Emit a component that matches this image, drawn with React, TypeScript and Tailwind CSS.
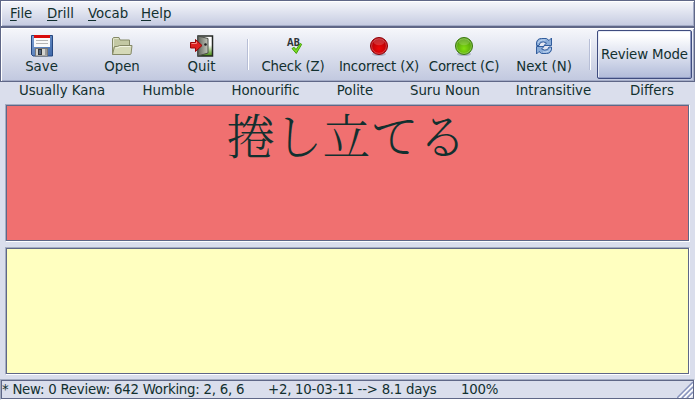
import type { ReactNode } from "react";

function SaveIcon() {
  return (
    <svg width="22" height="22" viewBox="0 0 22 22">
      <defs>
        <linearGradient id="disk" x1="0" y1="0" x2="1" y2="1">
          <stop offset="0" stopColor="#7fa2d4" />
          <stop offset="1" stopColor="#3d68aa" />
        </linearGradient>
      </defs>
      <path d="M.5 .5h21v20.5h-19.500l-1.500-1.500z" fill="url(#disk)" stroke="#26477f" />
      <rect x="3" y="0" width="16" height="12" fill="#fafafa" />
      <rect x="3" y="0" width="16" height="3" fill="#d80b0b" />
      <path d="M5 5.500h12M5 8.500h12" stroke="#b5b5b5" />
      <rect x="4.500" y="13.500" width="12" height="7.500" fill="#d5d5d0" stroke="#777" />
      <rect x="7.500" y="14.500" width="3" height="5" fill="#52647d" stroke="#30363d" />
      <path d="M14 14l2 0v6h-2z" fill="#999" />
    </svg>
  );
}

function OpenIcon() {
  return (
    <svg width="22" height="22" viewBox="0 0 22 22">
      <path d="M1.500 19.500V3.500l1-1H8l1 2.500h9.500v7" fill="#c3c8a3" stroke="#858967" />
      <path d="M2.500 12V4l1-.5h4" fill="none" stroke="#e3e6cd" />
      <path d="M3.500 11.500q3 .500 5-1h12.500l-1 8.500-.800.500H1.500z" fill="#d5d9b8" stroke="#858967" />
      <path d="M4.500 13q3 0 4.500-1.500h10.500" fill="none" stroke="#f2f4e2" />
    </svg>
  );
}

function QuitIcon() {
  return (
    <svg width="24" height="22" viewBox="0 0 24 22">
      <defs>
        <linearGradient id="outside" x1="0" y1="0" x2="0" y2="1">
          <stop offset=".45" stopColor="#fff" />
          <stop offset="1" stopColor="#428b08" />
        </linearGradient>
        <linearGradient id="door" x1="0" y1="0" x2="1" y2="0">
          <stop offset="0" stopColor="#62665d" />
          <stop offset="1" stopColor="#c4c6bc" />
        </linearGradient>
      </defs>
      <rect x="8" y="1" width="14.500" height="20" fill="url(#outside)" stroke="#252825" strokeWidth="1.500" />
      <path d="M8 1l10 2.500v14.500L8 21z" fill="url(#door)" stroke="#494c46" />
      <circle cx="15.500" cy="9.500" r="1.300" fill="#222" />
      <path d="M.5 7.500h5V4.500l6.500 6-6.500 6v-3.500h-5z" fill="#dc2020" stroke="#9b0505" />
      <path d="M1.500 8.500h5v-2" fill="none" stroke="#f58a82" />
    </svg>
  );
}

function CheckIcon() {
  return (
    <svg width="22" height="22" viewBox="0 0 22 22">
      <text x="5" y="11" fontFamily="Open Sans, sans-serif" fontWeight="700" fontSize="10.500" fill="#2e3436" textLength="13" lengthAdjust="spacingAndGlyphs">AB</text>
      <path d="M10 13.500l2.200-1.200 1.800 2.400 4.200-6.200 1.500.8-5.400 9.200z" fill="#79dc25" stroke="#46a008" />
    </svg>
  );
}

function BallIcon({ tone }: { tone: "red" | "green" }) {
  const red = tone === "red";
  return (
    <svg width="22" height="22" viewBox="0 0 22 22">
      <defs>
        <radialGradient id={tone} cy=".65">
          <stop offset="0" stopColor={red ? "#ee0808" : "#82df10"} />
          <stop offset="1" stopColor={red ? "#b90005" : "#55a30a"} />
        </radialGradient>
      </defs>
      <ellipse cx="11" cy="19" rx="7" ry="2" fill="#7a8299" opacity=".45" />
      <circle cx="11" cy="11" r="8.500" fill={`url(#${tone})`} stroke={red ? "#900006" : "#3b7811"} />
      <circle cx="11" cy="11" r="7.400" fill="none" stroke="#fff" opacity=".25" />
      <ellipse cx="11" cy="7" rx="5.500" ry="3.300" fill="#fff" opacity=".17" />
    </svg>
  );
}

function NextIcon() {
  return (
    <svg width="22" height="22" viewBox="0 0 22 22">
      <g fill="#8aacd8" stroke="#325d9d">
        <path d="M3.500 10.500V8Q4 3.500 8.500 3.500h5l2.500 2 2.500-2.500v7.500h-7.500l2.500-2.500Q10 6 7.500 7.500L6 10.500z" />
        <path d="M18.500 12V14Q18 18.500 13.500 18.500h-5L6 16.500 3.500 19v-7.500H11l-2.500 2.500Q12 16 14.500 14.500L16 12z" />
      </g>
      <path d="M5 8q1-3.500 7.500-3M17.500 13.500q-1 4-7.500 3.500" fill="none" stroke="#c8dcf5" />
    </svg>
  );
}

function Tool({ width, icon, label, tight = false }: { width: string; icon: ReactNode; label: string; tight?: boolean }) {
  return (
    <button className={`${width} flex shrink-0 flex-col items-center pt-[7px]`}>
      {icon}
      <span className={`mt-[2px] leading-[16px] whitespace-nowrap ${tight ? "tracking-[-0.2px]" : ""}`}>{label}</span>
    </button>
  );
}

function Separator({ className }: { className: string }) {
  return <div className={`${className} mt-[11px] h-[31px] w-[2px] shrink-0 border-l border-[#b7bed6] bg-white`} />;
}

const menus = [
  ["File", "w-[37px]"],
  ["Drill", "w-[41px]"],
  ["Vocab", "w-[53px]"],
  ["Help", "w-[40px]"],
];

const flags = [
  ["Usually Kana", "w-[124px]"],
  ["Humble", "w-[89px]"],
  ["Honourific", "w-[105px]"],
  ["Polite", "w-[74px]"],
  ["Suru Noun", "w-[106px]"],
  ["Intransitive", "w-[111px]"],
  ["Differs", "w-[86px]"],
];

export default function App() {
  return (
    <div className="flex h-[400px] w-[695px] flex-col overflow-hidden bg-[#dadeec] font-['DejaVu_Sans',sans-serif] text-[13.333px] text-[#12302f]">
      <nav className="flex h-[27px] shrink-0 border border-[#5f6787] bg-linear-to-b from-[#f6f7fb] to-[#c5cbe1] pl-[9px] shadow-[inset_1px_1px_0_white,inset_-1px_-1px_0_#a3abc6]">
        {menus.map(([m, w]) => (
          <span key={m} className={`${w} pt-[5px] leading-[16px]`}>
            <span className="underline decoration-1 underline-offset-2">{m[0]}</span>
            {m.slice(1)}
          </span>
        ))}
      </nav>
      <header className="flex h-[55px] shrink-0 border border-[#5f6787] bg-linear-to-b from-[#f6f7fb] to-[#c1c8df] shadow-[inset_1px_1px_0_white,inset_-1px_-1px_0_#a3abc6]">
        <Tool width="w-[81px]" icon={<SaveIcon />} label="Save" />
        <Tool width="w-[80px]" icon={<OpenIcon />} label="Open" />
        <Tool width="w-[79px]" icon={<QuitIcon />} label="Quit" />
        <Separator className="ml-[6px]" />
        <Tool width="w-[88px]" icon={<CheckIcon />} label="Check (Z)" tight />
        <Tool width="w-[84px]" icon={<BallIcon tone="red" />} label="Incorrect (X)" tight />
        <Tool width="w-[86px]" icon={<BallIcon tone="green" />} label="Correct (C)" tight />
        <Tool width="w-[74px]" icon={<NextIcon />} label="Next (N)" />
        <Separator className="ml-[8px]" />
        <button className="mt-[2px] ml-[6px] h-[49px] w-[95px] shrink-0 rounded-[2px] border border-[#3f4c7f] bg-linear-to-b from-white from-10% via-[#d9deed] via-55% to-[#b1bbd9] tracking-[-0.12px] whitespace-nowrap shadow-[inset_-1px_-1px_0_#929dc4,inset_1px_1px_0_#e8ecf6]">
          Review Mode
        </button>
      </header>
      <div className="flex h-[22px] shrink-0">
        {flags.map(([f, w]) => (
          <span key={f} className={`${w} shrink-0 text-center leading-[17px] whitespace-nowrap`}>{f}</span>
        ))}
      </div>
      <main className="flex shrink-0 flex-col gap-[5px] px-[5px]">
        <section className="h-[138px] border border-t-[#a4adc1] border-r-white border-b-white border-l-[#a4adc1]">
          <div lang="ja" className="h-full border border-[#5f6787] bg-[#f07070] pr-[2px] text-center font-['Noto_Serif_CJK_JP','Noto_Sans_CJK_JP',serif] text-[48px] leading-[55px] font-light">
            捲し立てる
          </div>
        </section>
        <section className="h-[128px] border border-t-[#a4adc1] border-r-white border-b-white border-l-[#a4adc1]">
          <div className="h-full border border-[#5f6787] bg-[#ffffc0]" />
        </section>
      </main>
      <footer className="mt-[4px] flex h-[21px] shrink-0 border border-t-[#a4adc1] border-r-white border-b-white border-l-[#a4adc1]">
        <div className="flex h-full w-full border border-[#5f6787] leading-[17px] tracking-[-0.25px] whitespace-pre">
          <span className="w-[266px]">* New: 0 Review: 642 Working: 2, 6, 6</span>
          <span className="w-[193px]">{"+2, 10-03-11 --> 8.1 days"}</span>
          <span>100%</span>
          <svg className="ml-auto" width="16" height="17" viewBox="0 0 16 17">
            <path d="M2 17L16 3M7 17L16 8M12 17L16 13" stroke="white" strokeWidth="1.500" />
            <path d="M0 17L16 1M5 17L16 6M10 17L16 11" stroke="#8793bd" strokeWidth="1.500" />
          </svg>
        </div>
      </footer>
    </div>
  );
}
